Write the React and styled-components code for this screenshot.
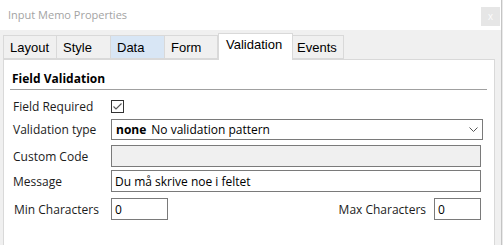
import React from "react";
import styled, { createGlobalStyle } from "styled-components";

const Global = createGlobalStyle`
  html, body { margin: 0; padding: 0; background: #ffffff; overflow: hidden; }
  * { box-sizing: border-box; }
`;

const Window = styled.div`
  width: 503px;
  height: 245px;
  display: flex;
  overflow: hidden;
  background: #ffffff;
`;

const Main = styled.div`
  width: 501px;
  display: flex;
  flex-direction: column;
`;

const EdgeStrip = styled.div`
  width: 2px;
  border-left: 1px solid #c4c4c4;
  background: #e9e9e9;
`;

const TitleBar = styled.div`
  height: 30px;
  display: flex;
  align-items: flex-start;
  justify-content: space-between;
  padding: 7px 1px 0 8px;
`;

const Title = styled.div`
  font-family: "Open Sans", "Noto Sans", sans-serif;
  font-size: 11px;
  line-height: 16px;
  color: #a3a3a3;
`;

const CloseButton = styled.div`
  width: 19px;
  height: 19px;
  background: #e6e6e6;
  color: #fbfbfb;
  font-family: "Liberation Sans", sans-serif;
  font-size: 10px;
  display: flex;
  align-items: center;
  justify-content: center;
`;

const TabBar = styled.div`
  height: 29px;
  background: #f0f0f0;
  display: flex;
  align-items: flex-end;
  padding-left: 3px;
`;

const Tab = styled.div`
  width: ${(p) => p.$w}px;
  height: ${(p) => (p.$active ? 27 : 24)}px;
  background: ${(p) => (p.$active ? "#ffffff" : p.$hover ? "#d8e6f5" : "#f0f0f0")};
  border: 1px solid #d9d9d9;
  border-bottom: ${(p) => (p.$active ? "none" : "1px solid #d9d9d9")};
  border-left: ${(p) => (p.$first || p.$active ? "1px solid #d9d9d9" : "none")};
  font-family: "Liberation Sans", Arial, sans-serif;
  font-size: 13px;
  color: #000;
  display: flex;
  align-items: ${(p) => (p.$active ? "flex-start" : "center")};
  padding-top: ${(p) => (p.$active ? 3 : 0)}px;
  padding-left: ${(p) => p.$pl}px;
  margin-bottom: ${(p) => (p.$active ? -1 : 0)}px;
  position: relative;
  z-index: ${(p) => (p.$active ? 1 : 0)};
`;

const BodyWrap = styled.div`
  flex: 1;
  background: #f0f0f0;
  padding: 0 6px 0 3px;
  display: flex;
`;

const Panel = styled.div`
  flex: 1;
  background: #ffffff;
  border: 1px solid #d9d9d9;
  border-bottom: none;
  display: flex;
  flex-direction: column;
`;

const SectionHeader = styled.div`
  margin: 11px 7px 0 6px;
  padding: 0 0 2px 2px;
  border-bottom: 1px solid #a0a0a0;
  font-family: "Open Sans", "Noto Sans", sans-serif;
  font-weight: 700;
  font-size: 12px;
  line-height: 16px;
  color: #000;
`;

const Form = styled.div`
  display: flex;
  flex-direction: column;
  padding: 0 13px 0 9px;
`;

const Row = styled.div`
  display: flex;
  align-items: center;
  height: ${(p) => p.$h}px;
  margin-top: ${(p) => p.$mt}px;
  margin-right: ${(p) => p.$mr || 0}px;
`;

const Label = styled.div`
  width: ${(p) => p.$w || 98}px;
  flex: none;
  padding-left: ${(p) => p.$pl || 0}px;
  padding-right: ${(p) => p.$pr || 0}px;
  text-align: ${(p) => (p.$right ? "right" : "left")};
  font-family: "Open Sans", "Noto Sans", sans-serif;
  font-size: 12px;
  color: #1b1b1b;
  white-space: nowrap;
`;

const Box = styled.div`
  flex: ${(p) => (p.$w ? "none" : 1)};
  width: ${(p) => (p.$w ? `${p.$w}px` : "auto")};
  height: 100%;
  border: 1px solid #7a7a7a;
  background: ${(p) => (p.$disabled ? "#f0f0f0" : "#ffffff")};
  display: flex;
  align-items: center;
  padding-left: 3px;
  font-family: "Open Sans", "Noto Sans", sans-serif;
  font-size: 12px;
  color: #000;
  white-space: nowrap;
`;

const Strong = styled.span`
  font-weight: 700;
  margin-right: 5px;
  margin-left: 1px;
`;

const Chevron = styled.svg`
  margin-left: auto;
  margin-right: 4px;
`;

const Spacer = styled.div`
  flex: 1;
`;

const CheckBox = styled.svg`
  flex: none;
`;

export default function App() {
  return (
    <>
      <Global />
      <Window>
        <Main>
          <TitleBar>
            <Title>Input Memo Properties</Title>
            <CloseButton>x</CloseButton>
          </TitleBar>
          <TabBar>
            <Tab $w={54} $pl={6} $first>Layout</Tab>
            <Tab $w={54} $pl={6}>Style</Tab>
            <Tab $w={54} $pl={6} $hover>Data</Tab>
            <Tab $w={53} $pl={6}>Form</Tab>
            <Tab $w={75} $pl={7} $active>Validation</Tab>
            <Tab $w={51} $pl={4}>Events</Tab>
          </TabBar>
          <BodyWrap>
            <Panel>
              <SectionHeader>Field Validation</SectionHeader>
              <Form>
                <Row $h={20} $mt={6}>
                  <Label>Field Required</Label>
                  <CheckBox width="13" height="13" viewBox="0 0 13 13">
                    <rect x="0.5" y="0.5" width="12" height="12" fill="#fff" stroke="#333" />
                    <path d="M2.5 6.5 L5 9 L10.5 3.5" fill="none" stroke="#555" strokeWidth="1.1" />
                  </CheckBox>
                </Row>
                <Row $h={21} $mt={3} $mr={-2}>
                  <Label>Validation type</Label>
                  <Box>
                    <Strong>none</Strong>No validation pattern
                    <Chevron width="9" height="5" viewBox="0 0 9 5">
                      <path d="M0.5 0.5 L4.5 4.5 L8.5 0.5" fill="none" stroke="#555" strokeWidth="1" />
                    </Chevron>
                  </Box>
                </Row>
                <Row $h={22} $mt={5}>
                  <Label>Custom Code</Label>
                  <Box $disabled />
                </Row>
                <Row $h={22} $mt={3}>
                  <Label>Message</Label>
                  <Box>Du må skrive noe i feltet</Box>
                </Row>
                <Row $h={22} $mt={6}>
                  <Label $pl={1}>Min Characters</Label>
                  <Box $w={57}>0</Box>
                  <Spacer />
                  <Label $w={110} $right $pr={8}>Max Characters</Label>
                  <Box $w={47}>0</Box>
                </Row>
              </Form>
            </Panel>
          </BodyWrap>
        </Main>
        <EdgeStrip />
      </Window>
    </>
  );
}
